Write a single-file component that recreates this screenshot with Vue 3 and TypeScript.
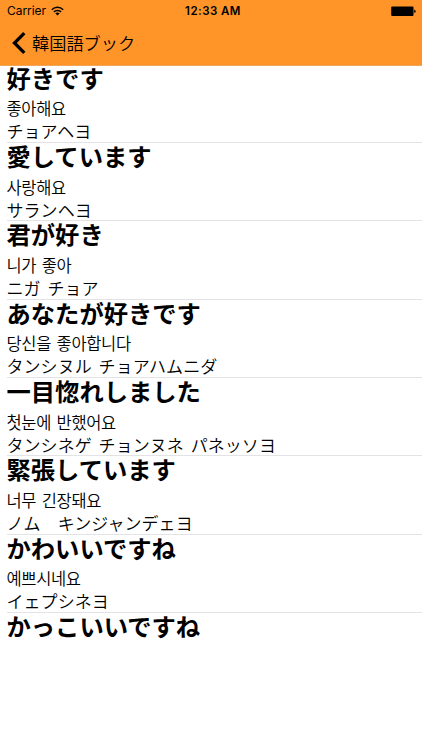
<script setup lang="ts">
interface Phrase {
  title: string
  korean?: string
  reading?: string
}

const phrases: Phrase[] = [
  { title: '好きです', korean: '좋아해요', reading: 'チョアヘヨ' },
  { title: '愛しています', korean: '사랑해요', reading: 'サランヘヨ' },
  { title: '君が好き', korean: '니가 좋아', reading: 'ニガ チョア' },
  { title: 'あなたが好きです', korean: '당신을 좋아합니다', reading: 'タンシヌル チョアハムニダ' },
  { title: '一目惚れしました', korean: '첫눈에 반했어요', reading: 'タンシネゲ チョンヌネ パネッソヨ' },
  { title: '緊張しています', korean: '너무 긴장돼요', reading: 'ノム　キンジャンデェヨ' },
  { title: 'かわいいですね', korean: '예쁘시네요', reading: 'イェプシネヨ' },
  { title: 'かっこいいですね' },
]
</script>

<template>
  <div class="screen">
    <header class="header">
      <div class="status">
        <div class="carrier">
          <span>Carrier</span>
          <svg class="wifi" viewBox="0 0 13 10" width="13" height="10">
            <g fill="none" stroke="#000" stroke-width="1.5">
              <path d="M0.8 3.7a8.1 8.1 0 0 1 11.4 0" />
              <path d="M2.9 5.9a5.1 5.1 0 0 1 7.2 0" />
            </g>
            <path d="M6.5 9.6 4.4 7.5a3 3 0 0 1 4.2 0z" />
          </svg>
        </div>
        <time class="time">12:33 AM</time>
        <div class="battery">
          <svg viewBox="0 0 25 11" width="25" height="11">
            <rect x="0.2" y="0.4" width="22.3" height="9.6" rx="1" />
            <path d="M23.2 3.7h.5q.9 0 .9 1.5t-.9 1.5h-.5z" />
          </svg>
        </div>
      </div>
      <nav class="nav">
        <svg class="chevron" viewBox="0 0 14 22" width="14" height="22">
          <path d="M12.3 1.2 2.5 11 12.3 20.8" fill="none" stroke="#000" stroke-width="3.3" />
        </svg>
        <span class="back">韓国語ブック</span>
      </nav>
    </header>
    <ul class="list">
      <li v-for="p in phrases" :key="p.title" class="row">
        <h2 class="title">{{ p.title }}</h2>
        <p v-if="p.korean" class="korean" lang="ko">{{ p.korean }}</p>
        <p v-if="p.reading" class="reading">{{ p.reading }}</p>
      </li>
    </ul>
  </div>
</template>

<style>
body {
  margin: 0;
  background: #fff;
}
</style>

<style scoped>
.screen {
  height: 750px;
  overflow: hidden;
  background: #fff;
  color: #000;
  font-family: Inter, "Noto Sans CJK JP", sans-serif;
}
.header {
  box-sizing: border-box;
  height: 66px;
  background: #ff9429;
  border-bottom: 1px solid #f2a65b;
}
.status {
  display: grid;
  grid-template-columns: 1fr auto 1fr;
  align-items: center;
  height: 22px;
  padding: 0 6px 0 7px;
  font-size: 12px;
  line-height: 22px;
}
.carrier {
  display: flex;
  align-items: center;
  gap: 5px;
  letter-spacing: -0.05px;
}
.wifi {
  margin-bottom: 1px;
}
.time {
  padding-left: 3px;
  font-weight: 600;
  font-size: 11.5px;
  letter-spacing: 0.45px;
}
.battery {
  display: flex;
  justify-content: flex-end;
}
.nav {
  display: flex;
  align-items: center;
  height: 42px;
  padding-left: 12px;
  gap: 6px;
}
.back {
  font-family: "Noto Sans CJK JP", sans-serif;
  font-size: 17.2px;
  font-weight: 350;
  line-height: 24px;
  margin-top: -1px;
}
.list {
  margin: 0;
  padding: 0;
  list-style: none;
}
.row {
  display: flex;
  flex-direction: column;
  box-sizing: border-box;
  height: 78.35px;
  margin-left: 7px;
  border-bottom: 1px solid #e3e3e5;
  white-space: pre;
}
.row:first-child {
  height: 77px;
}
.row:first-child .title {
  margin-top: -1.35px;
}
.row:last-child {
  border-bottom: 0;
}
.title,
.korean,
.reading {
  flex: none;
  margin: 0 0 0 -0.5px;
}
.title {
  height: 31.6px;
  font-family: "Noto Sans CJK JP", sans-serif;
  font-size: 24.3px;
  line-height: 26px;
  font-weight: 700;
}
.korean {
  height: 24px;
  font-family: "Noto Sans CJK KR", sans-serif;
  font-size: 16.5px;
  font-weight: 350;
  line-height: 24px;
  letter-spacing: -0.35px;
  word-spacing: 1.3px;
}
.reading {
  height: 21px;
  font-family: "Noto Sans CJK JP", sans-serif;
  font-size: 17px;
  font-weight: 350;
  line-height: 22px;
  letter-spacing: 0.05px;
  word-spacing: 3px;
}
</style>
